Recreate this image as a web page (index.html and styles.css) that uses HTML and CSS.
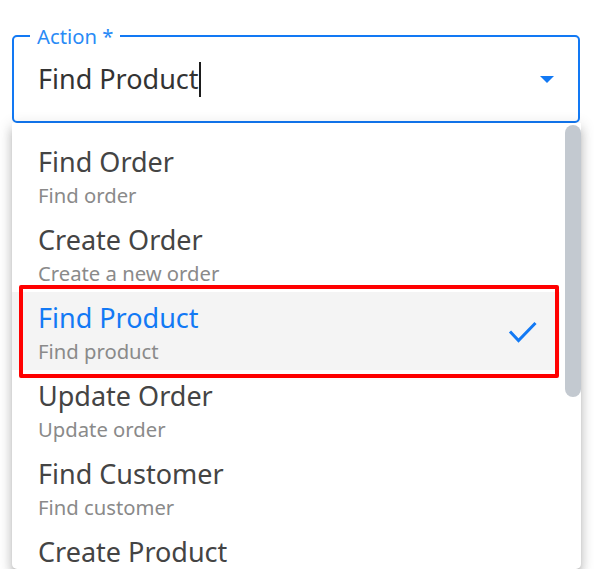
FILE: index.html
```html
<!DOCTYPE html>
<html lang="en">
<head>
<meta charset="utf-8">
<title>Action select</title>
<link rel="stylesheet" href="styles.css">
</head>
<body>
<div class="page">
  <fieldset class="field">
    <legend class="field-label">Action *</legend>
    <div class="field-row">
      <span class="field-value">Find Product</span><span class="caret"></span>
      <span class="spacer"></span>
      <svg class="arrow" width="14" height="7" viewBox="0 0 14 7"><path d="M0 0h14L7 7z" fill="#1279f4"/></svg>
    </div>
  </fieldset>
  <div class="menu">
    <ul class="options">
      <li class="option"><div class="opt-text"><div class="opt-title">Find Order</div><div class="opt-desc">Find order</div></div></li>
      <li class="option"><div class="opt-text"><div class="opt-title">Create Order</div><div class="opt-desc">Create a new order</div></div></li>
      <li class="option selected"><div class="opt-text"><div class="opt-title">Find Product</div><div class="opt-desc">Find product</div></div>
        <svg class="check" width="30" height="24" viewBox="0 0 30 24"><path d="M2 10.5l8.5 9L27.5 2" fill="none" stroke="#1279f4" stroke-width="3"/></svg>
      </li>
      <li class="option"><div class="opt-text"><div class="opt-title">Update Order</div><div class="opt-desc">Update order</div></div></li>
      <li class="option"><div class="opt-text"><div class="opt-title">Find Customer</div><div class="opt-desc">Find customer</div></div></li>
      <li class="option"><div class="opt-text"><div class="opt-title">Create Product</div></div></li>
    </ul>
    <div class="scrollbar"></div>
    <div class="highlight"></div>
  </div>
</div>
</body>
</html>
```
FILE: styles.css
```css
html, body {
  margin: 0;
  padding: 0;
  background: #ffffff;
}
body {
  font-family: "Noto Sans", "Open Sans", sans-serif;
}
.page {
  padding: 24px 0 0 12px;
}
.field {
  box-sizing: border-box;
  width: 568px;
  height: 99px;
  margin: 0;
  padding: 0;
  border: 2px solid #1279f4;
  border-radius: 5px;
  min-inline-size: 0;
  background: #ffffff;
}
.field-label {
  margin-left: 16px;
  padding: 0 7px;
  font-size: 20.25px;
  line-height: 24px;
  color: #2a8bf6;
}
.field-row {
  display: flex;
  align-items: center;
  height: 36px;
  margin-top: 13px;
  padding: 0 24px;
}
.field-value {
  font-size: 27px;
  line-height: 36px;
  color: #333333;
}
.caret {
  width: 2px;
  height: 35px;
  background: #1d1d1d;
}
.spacer {
  flex: 1;
}
.arrow {
  display: block;
}
.menu {
  position: relative;
  z-index: 2;
  box-sizing: border-box;
  width: 569px;
  height: 446px;
  padding-top: 13px;
  overflow: hidden;
  background: #ffffff;
  border-radius: 0 0 5px 5px;
  box-shadow: 0 5px 5px -3px rgba(0,0,0,0.2), 0 8px 10px 1px rgba(0,0,0,0.14), 0 3px 14px 2px rgba(0,0,0,0.12);
}
.options {
  list-style: none;
  margin: 0;
  padding: 0;
}
.option {
  display: flex;
  align-items: flex-start;
  height: 78px;
  box-sizing: border-box;
  margin-right: 21px;
  padding: 8px 22px 4px 26px;
}
.opt-text {
  flex: 1;
}
.opt-title {
  font-size: 27px;
  line-height: 36px;
  color: #444444;
}
.opt-desc {
  font-size: 20.25px;
  line-height: 30px;
  color: #8a8a8a;
}
.selected {
  background: #f4f4f4;
}
.selected .opt-title {
  color: #1279f4;
}
.check {
  display: block;
  align-self: center;
}
.scrollbar {
  position: absolute;
  top: 2px;
  right: 0;
  width: 16px;
  height: 272px;
  border-radius: 8px;
  background: #c3c9d0;
}
.highlight {
  position: absolute;
  left: 7px;
  top: 162px;
  width: 540px;
  height: 93px;
  box-sizing: border-box;
  border: 4px solid #ff0000;
  border-radius: 2px;
}
```
